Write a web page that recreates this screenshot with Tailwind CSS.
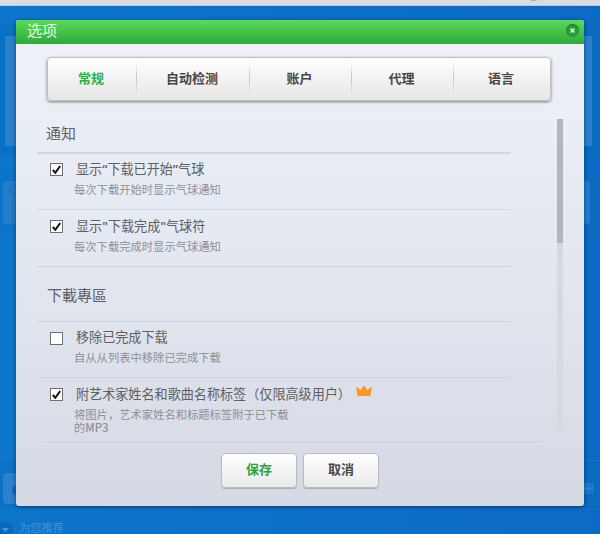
<!DOCTYPE html>
<html lang="zh-CN">
<head>
  <meta charset="UTF-8" />
  <meta name="viewport" content="width=device-width, initial-scale=1.0"/>
  <title>选项</title>
  <script src="https://cdn.jsdelivr.net/npm/@tailwindcss/browser@4"></script>
</head>
<body class="relative w-[600px] h-[534px] overflow-hidden bg-[#0c74c9] font-['Open_Sans','Noto_Sans_CJK_SC',sans-serif]">

  <!-- Dimmed app behind the dialog -->
  <div class="absolute inset-0 bg-linear-to-r from-[#0c76cb] to-[#0c6ac4]">
    <div class="absolute inset-x-0 top-0 h-[6px] bg-[#d9dce3] border-b border-[#b5c9e4]"></div>
    <div class="absolute left-[528px] -top-[10px] w-[11px] h-[11px] rounded-full bg-[#a5a8b0]"></div>
    <div class="absolute inset-x-0 top-[24px] h-[131px] bg-[#0a66bb]/35"></div>
    <div class="absolute left-[5px] top-[36px] w-[587px] h-[110px] bg-[#2b80cb]"></div>
    <div class="absolute inset-x-0 top-[173px] h-[57px] bg-[#0a66bb]/15"></div>
    <div class="absolute left-[3px] top-[181px] w-[587px] h-[43px] rounded bg-[#237dcb]"></div>
    <div class="absolute left-[9px] top-[184px] w-[11px] h-[11px] rounded-full border-2 border-[#1b73c2]"></div>
    <div class="absolute inset-x-0 top-[460px] h-[50px] border-y border-[#2a80cc]/35 bg-[#0a69be]/30"></div>
    <div class="absolute left-[3px] top-[473px] w-[60px] h-[31px] rounded bg-[#2b81cd]"></div>
    <div class="absolute left-[12px] top-[486px] w-[10px] h-[9px] rounded-sm bg-[#0f69ba]"></div>
    <div class="absolute left-[583px] top-[483px] text-[11px] leading-[12px] text-[#3c8ad0]">删</div>
    <div class="absolute -left-[3px] top-[522px] w-[16px] h-[16px] rounded-full bg-[#0b69bc]"></div>
    <svg class="absolute left-[2px] top-[528px]" width="7" height="4" viewBox="0 0 7 4"><path d="M0 0h7L3.500 4z" fill="#4794d6"/></svg>
    <div class="absolute left-[19px] top-[522px] text-[11.200px] leading-[12px] text-[#4390d3]">为您推荐</div>
  </div>

  <!-- Options dialog -->
  <div class="absolute left-[16px] top-[20px] w-[568px] h-[486px] flex flex-col rounded-[3px] overflow-hidden bg-linear-to-b from-[#f0f3f8] via-[#e3e7f0] to-[#d4d9e4] shadow-[0_1px_4px_rgba(0,30,70,0.600)]">

    <header class="h-[24px] shrink-0 flex items-center justify-between pl-[11px] pr-[5px] bg-linear-to-b from-[#5cda57] to-[#2fab3f] border-b border-[#35a842]">
      <h1 class="text-[15px] leading-[22px] text-[#e9fbe6] -mt-[3px]">选项</h1>
      <button class="size-[13px] rounded-full bg-[#299a3a] flex items-center justify-center -mt-[2px] shadow-[inset_0_1px_1px_#1d7f2c]">
        <svg width="5" height="5" viewBox="0 0 5 5"><path d="M.5.5l4 4M4.500.5l-4 4" stroke="#e4f8df" stroke-width="1.500"/></svg>
      </button>
    </header>

    <!-- Tabs -->
    <nav class="mt-[13px] ml-[31px] w-[504px] h-[44px] shrink-0 flex items-stretch rounded-[4px] border border-[#bfc3c6] bg-linear-to-b from-white to-[#e6e6e6] shadow-[0_1px_3px_rgba(0,0,0,0.500)] text-[13px] font-bold text-[#484848]">
      <a class="w-[88px] flex items-center justify-center pr-[2px] pb-px text-[#36ad45]">常规</a>
      <i class="w-px my-[4px] bg-linear-to-b from-transparent via-[#c4c4c4] to-transparent"></i>
      <a class="w-[112px] flex items-center justify-center pr-[2px] pb-px">自动检测</a>
      <i class="w-px my-[4px] bg-linear-to-b from-transparent via-[#c4c4c4] to-transparent"></i>
      <a class="w-[101px] flex items-center justify-center pr-[2px] pb-px">账户</a>
      <i class="w-px my-[4px] bg-linear-to-b from-transparent via-[#c4c4c4] to-transparent"></i>
      <a class="w-[101px] flex items-center justify-center pr-[2px] pb-px">代理</a>
      <i class="w-px my-[4px] bg-linear-to-b from-transparent via-[#c4c4c4] to-transparent"></i>
      <a class="flex-1 flex items-center justify-center pr-[2px] pb-px">语言</a>
    </nav>

    <!-- Settings list -->
    <main class="mt-[18px] h-[315px] shrink-0 flex justify-between pl-[21px] pr-[21px]">
      <div class="w-[474px] text-[#5e6064]">
        <h2 class="h-[35px] pl-[9px] pt-[4px] text-[15px] leading-[20px] border-b-2 border-[#d3d7da]">通知</h2>

        <div class="h-[56px] flex pl-[13px] border-b border-[#d5d9de]">
          <span class="mt-[9px] size-[13px] border border-[#6d6f72] bg-white flex items-center justify-center">
            <svg width="9" height="9" viewBox="0 0 9 9"><path d="M.8 4.800l2.500 3L8.200 1" fill="none" stroke="#111" stroke-width="2"/></svg>
          </span>
          <div class="pl-[11px]">
            <p class="mt-[5px] pl-[2px] text-[13.100px] leading-[20px]">显示<b class="font-semibold">“</b>下载已开始<b class="font-semibold">”</b>气球</p>
            <p class="mt-[4px] text-[11.300px] leading-[13px] text-[#8e9095]">每次下载开始时显示气球通知</p>
          </div>
        </div>

        <div class="h-[57px] flex pl-[13px] border-b border-[#d1d5db]">
          <span class="mt-[10px] size-[13px] border border-[#6d6f72] bg-white flex items-center justify-center">
            <svg width="9" height="9" viewBox="0 0 9 9"><path d="M.8 4.800l2.500 3L8.200 1" fill="none" stroke="#111" stroke-width="2"/></svg>
          </span>
          <div class="pl-[11px]">
            <p class="mt-[6px] pl-[2px] text-[13.100px] leading-[20px]">显示<b class="font-semibold">"</b>下载完成<b class="font-semibold">"</b>气球符</p>
            <p class="mt-[4px] text-[11.300px] leading-[13px] text-[#8e9095]">每次下载完成时显示气球通知</p>
          </div>
        </div>

        <h2 class="h-[55px] pl-[10px] pt-[18px] text-[15px] leading-[20px] border-b border-[#cfd3dc]">下載專區</h2>

        <div class="h-[56px] flex pl-[13px] border-b border-[#cfd3dc]">
          <span class="mt-[10px] size-[13px] border border-[#6d6f72] bg-white"></span>
          <div class="pl-[11px]">
            <p class="mt-[5px] pl-[2px] text-[13.100px] leading-[20px]">移除已完成下载</p>
            <p class="mt-[4px] text-[11.300px] leading-[13px] text-[#8e9095]">自从从列表中移除已完成下载</p>
          </div>
        </div>

        <div class="flex pl-[13px]">
          <span class="mt-[10px] size-[13px] shrink-0 border border-[#6d6f72] bg-white flex items-center justify-center">
            <svg width="9" height="9" viewBox="0 0 9 9"><path d="M.8 4.800l2.500 3L8.200 1" fill="none" stroke="#111" stroke-width="2"/></svg>
          </span>
          <div class="pl-[11px]">
            <div class="mt-[6px] pl-[2px] flex items-start">
              <p class="text-[13.100px] leading-[20px] whitespace-nowrap w-[280px]">附艺术家姓名和歌曲名称标签（仅限高级用户）</p>
              <svg class="mt-[2px]" width="16" height="10" viewBox="0 0 16 10"><path d="M0 1.500Q.8.700 1.700 1.500L4.600 4.300 7 .8Q8-.4 9 .8l2.400 3.500 2.900-2.800q.9-.8 1.700 0L14.300 10H1.700z" fill="#fb981d"/></svg>
            </div>
            <p class="mt-[4px] w-[220px] text-[11.300px] leading-[13px] text-[#8e9095]">将图片，艺术家姓名和标题标签附于已下载<br>的<span class="font-['Noto_Sans_CJK_SC'] leading-none font-medium">MP3</span></p>
          </div>
        </div>
      </div>

      <!-- Scrollbar -->
      <div class="w-[6px] bg-[#d6d9dd]">
        <div class="h-[124px] bg-[#b2b5b9]"></div>
      </div>
    </main>

    <!-- Buttons -->
    <footer class="mt-[8px] mx-[26px] w-[501px] border-t border-[#cbd0da] shadow-[inset_0_1px_0_#e3e7ef] pt-[10px] flex gap-[6px] pl-[179px] text-[13px] font-bold">
      <button class="w-[76px] h-[35px] pb-[2px] rounded-[4px] border border-[#b9bcc0] bg-linear-to-b from-white to-[#e9e9e9] shadow-[0_1px_1px_rgba(0,0,0,0.200)] text-[#2fa33f]">保存</button>
      <button class="w-[76px] h-[35px] pb-[2px] rounded-[4px] border border-[#b9bcc0] bg-linear-to-b from-white to-[#e9e9e9] shadow-[0_1px_1px_rgba(0,0,0,0.200)] text-[#484848]">取消</button>
    </footer>
  </div>
</body>
</html>
